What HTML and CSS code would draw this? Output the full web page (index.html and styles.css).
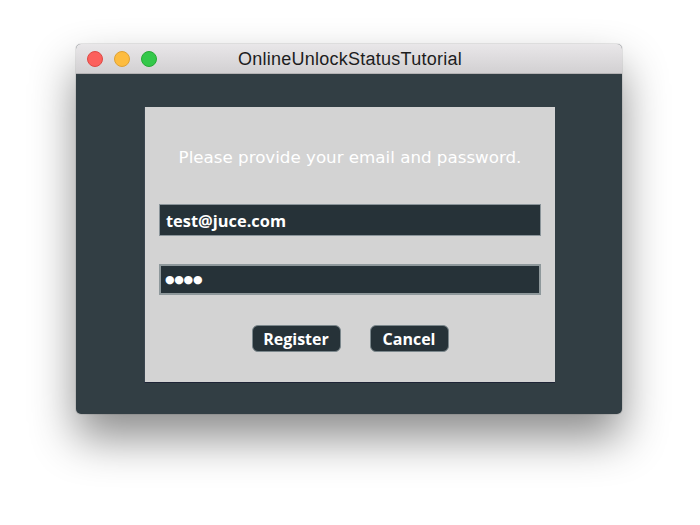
FILE: index.html
```html
<!DOCTYPE html>
<html>
<head>
<meta charset="utf-8">
<link rel="stylesheet" href="styles.css">
</head>
<body>
<div class="window">
  <div class="titlebar">
    <div class="lights">
      <span class="light red"></span>
      <span class="light yellow"></span>
      <span class="light green"></span>
    </div>
    <div class="title">OnlineUnlockStatusTutorial</div>
  </div>
  <div class="content">
    <div class="panel">
      <div class="prompt">Please provide your email and password.</div>
      <div class="field email">test@juce.com</div>
      <div class="field password">●●●●</div>
      <div class="buttons">
        <div class="btn register">Register</div>
        <div class="btn cancel">Cancel</div>
      </div>
    </div>
  </div>
</div>
</body>
</html>
```

FILE: styles.css
```css
html, body {
  margin: 0;
  padding: 0;
  background: #ffffff;
  width: 700px;
  height: 525px;
  overflow: hidden;
}
body {
  padding-top: 44px;
  padding-left: 76px;
  box-sizing: border-box;
}
.window {
  width: 546px;
  height: 370px;
  border-radius: 5px;
  overflow: hidden;
  display: flex;
  flex-direction: column;
  box-shadow: 0 24px 45px rgba(0,0,0,0.45), 0 0 0 1px rgba(0,0,0,0.08);
  background: #323e44;
}
.titlebar {
  height: 29px;
  flex: none;
  background: linear-gradient(#e9e7e9, #d2d0d2);
  border-bottom: 1px solid #b4b2b4;
  display: flex;
  align-items: center;
  position: relative;
}
.lights {
  display: flex;
  gap: 11px;
  padding-left: 11px;
}
.light {
  width: 16px;
  height: 16px;
  border-radius: 50%;
  box-sizing: border-box;
}
.red { background: #fc605c; border: 1px solid #de4a45; }
.yellow { background: #fdbc40; border: 1px solid #dea135; }
.green { background: #34c84a; border: 1px solid #27aa35; }
.title {
  position: absolute;
  left: 0;
  right: 0;
  text-align: center;
  font-family: "Liberation Sans", Arial, sans-serif;
  font-size: 18px;
  letter-spacing: 0.25px;
  color: #1d1d1d;
  top: 5px;
  padding-left: 2px;
}
.content {
  flex: 1;
  padding-top: 33px;
  padding-left: 68px;
}
.panel {
  width: 411px;
  height: 276px;
  box-sizing: border-box;
  background: #d3d3d3;
  border-left: 1px solid #3b4650;
  border-bottom: 1px solid #1e2436;
  display: flex;
  flex-direction: column;
  padding-left: 14px;
  font-family: "DejaVu Sans", Verdana, sans-serif;
}
.prompt {
  color: #ffffff;
  font-size: 16.7px;
  text-align: center;
  width: 382px;
  margin-top: 39px;
  height: 22px;
  line-height: 22px;
}
.field {
  width: 382px;
  box-sizing: border-box;
  background: #263238;
  color: #ffffff;
  font-family: "Open Sans", "DejaVu Sans", sans-serif;
  font-weight: bold;
  font-size: 16.4px;
  display: flex;
  align-items: center;
}
.email {
  margin-top: 36px;
  height: 32px;
  border: 1px solid #8a9499;
  padding-left: 6px;
}
.password {
  margin-top: 28px;
  height: 31px;
  border: 2px solid #8e989b;
  padding-left: 4px;
  font-family: "DejaVu Sans", sans-serif;
  font-size: 11px;
  letter-spacing: -0.3px;
}
.buttons {
  display: flex;
  justify-content: center;
  gap: 29px;
  width: 382px;
  margin-top: 30px;
}
.btn {
  height: 27px;
  box-sizing: border-box;
  background: #263238;
  border: 1px solid #7b878c;
  border-radius: 6px;
  color: #ffffff;
  font-family: "Open Sans", "DejaVu Sans", sans-serif;
  font-weight: bold;
  font-size: 16px;
  display: flex;
  align-items: center;
  justify-content: center;
}
.register { width: 89px; }
.cancel { width: 79px; }
```
